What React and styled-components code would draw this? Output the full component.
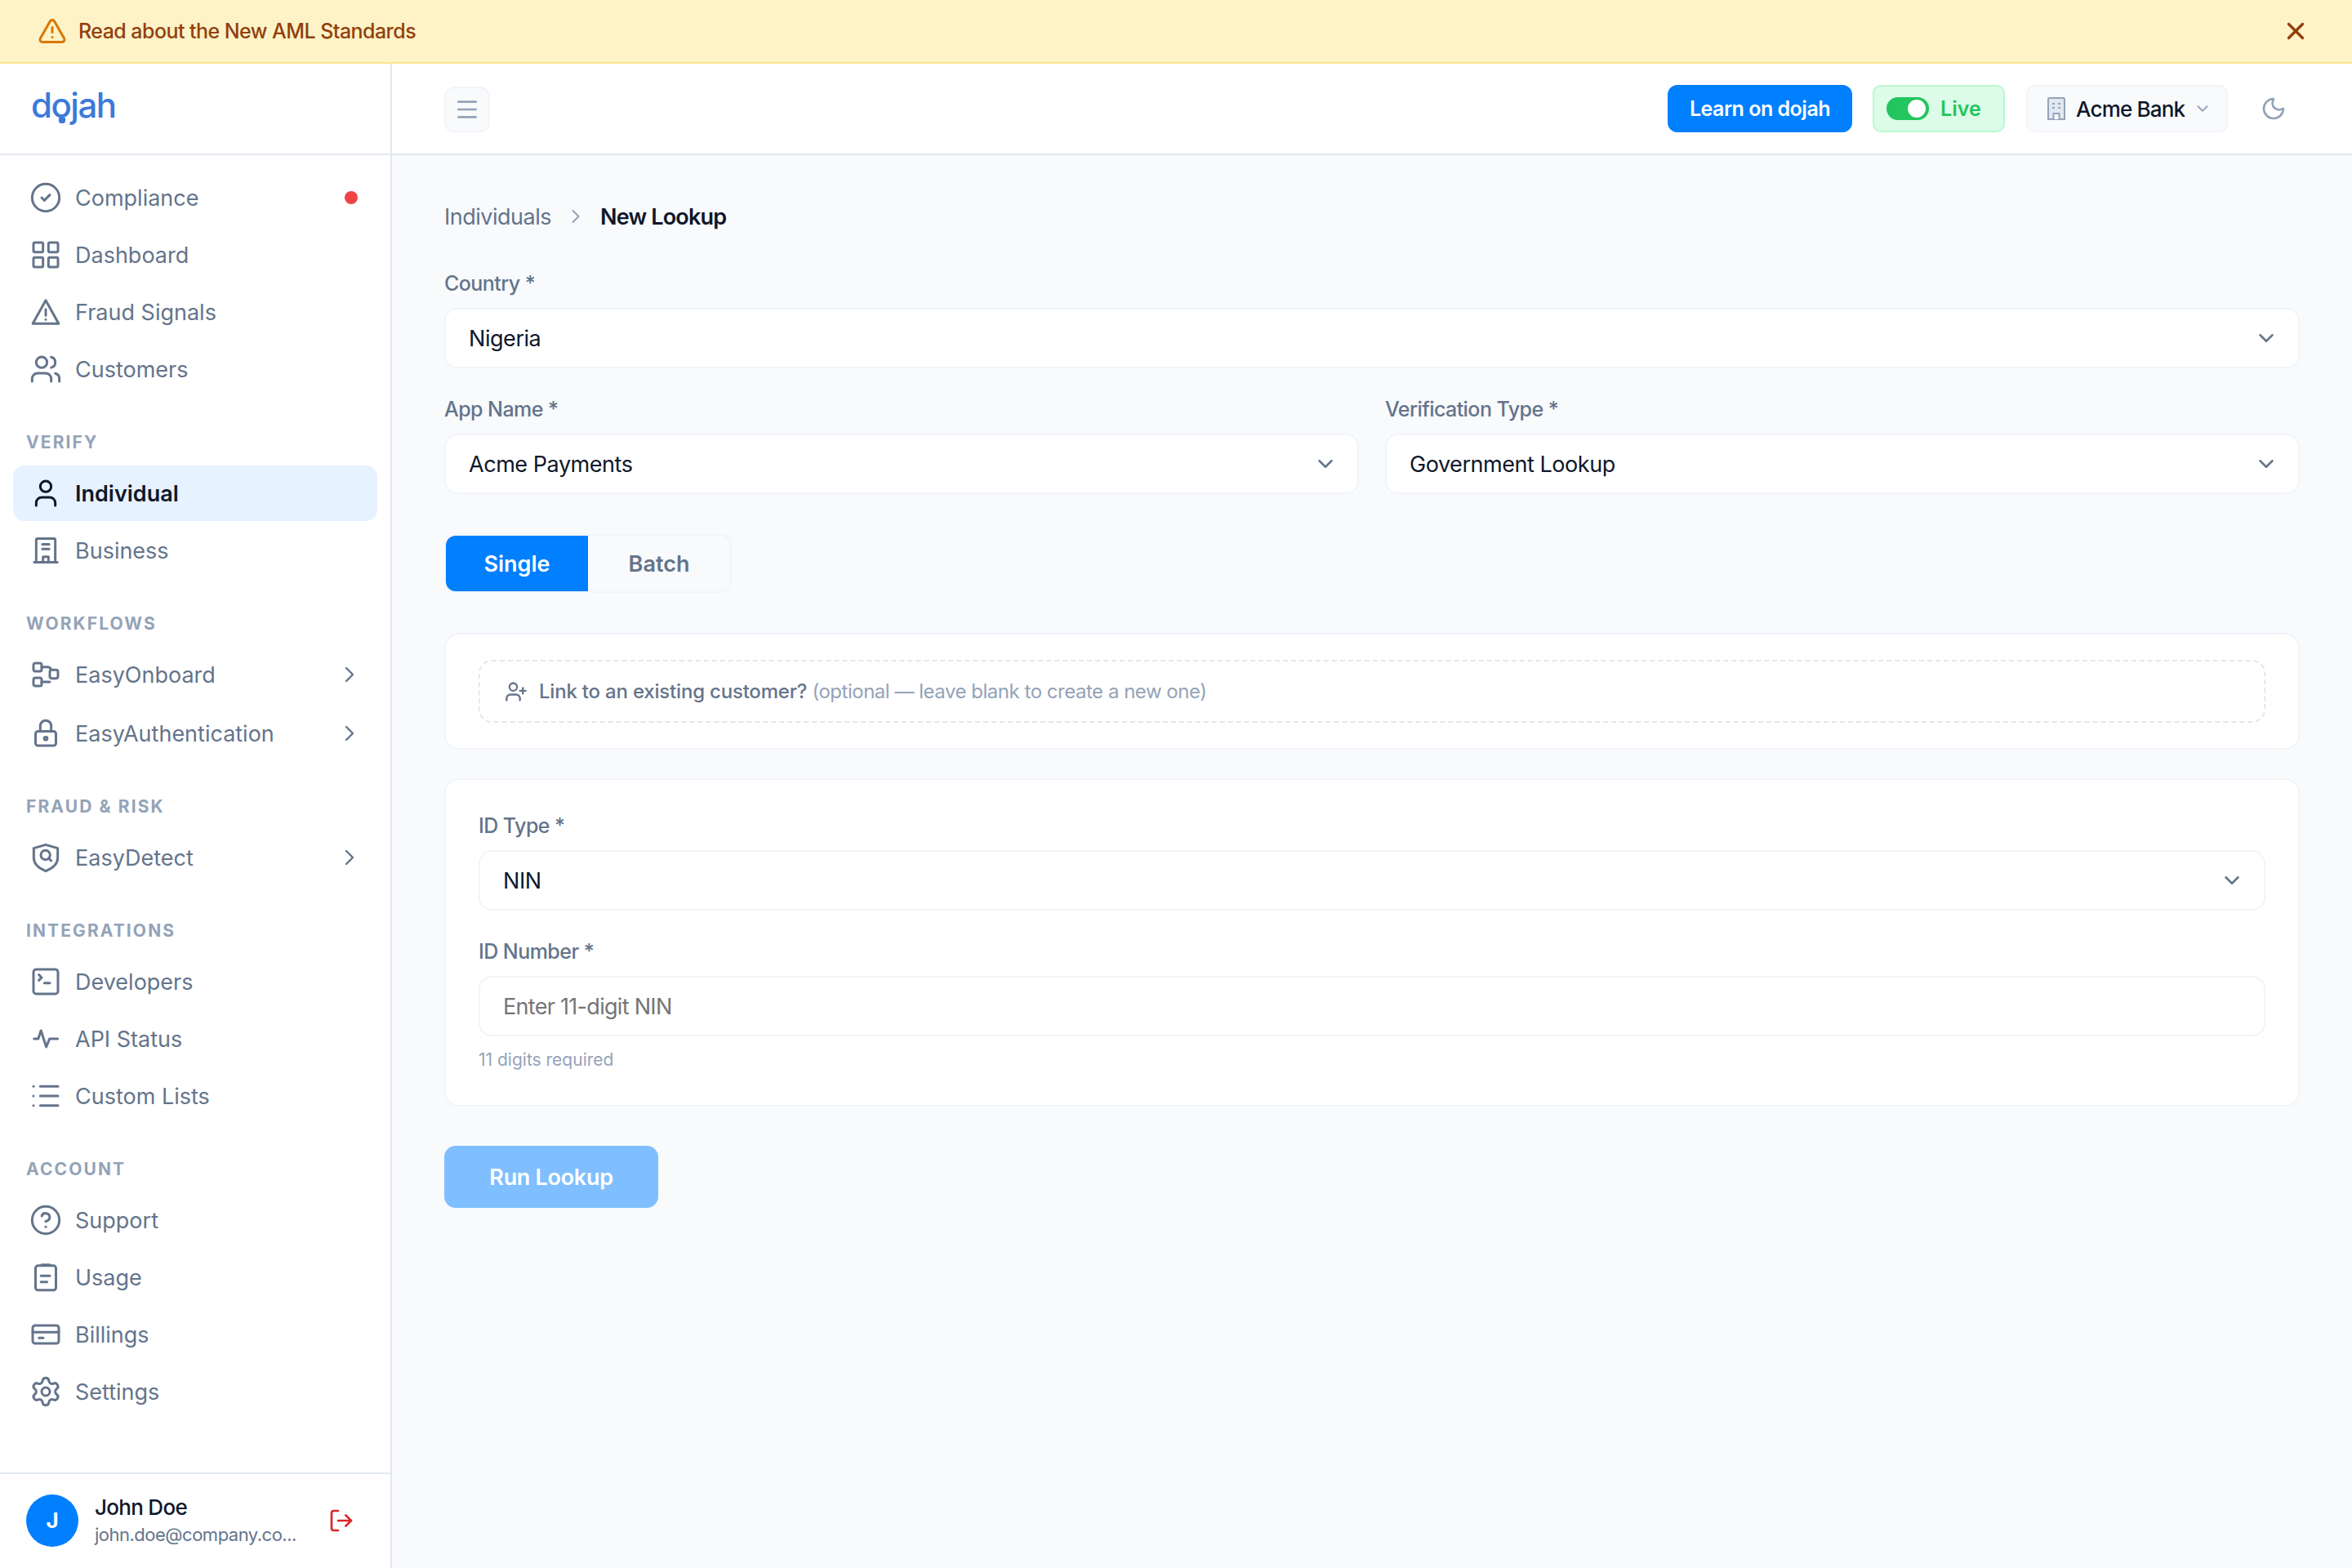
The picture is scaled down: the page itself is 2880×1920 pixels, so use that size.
import React from "react";
import styled, { createGlobalStyle } from "styled-components";
import {
  ChevronDown, ChevronRight, CircleCheck, CircleHelp, LayoutGrid, List, LogOut, Menu, Moon,
  Settings, SquareTerminal, TriangleAlert, User, UserPlus, Users, X,
} from "lucide-react";

const Global = createGlobalStyle`
  html, body { margin: 0; padding: 0; height: 100%; }
  body { font-family: Inter, "Liberation Sans", sans-serif; background: #f8fafc; }
  * { box-sizing: border-box; }
`;

const Glyph = ({ size = 24, children, ...rest }) => (
  <svg width={size} height={size} viewBox="0 0 24 24" fill="none" stroke="currentColor" strokeWidth="2" strokeLinecap="round" strokeLinejoin="round" {...rest}>
    {children}
  </svg>
);

const FlowIcon = (props) => (
  <Glyph {...props}>
    <rect x="3" y="3.6" width="6" height="6" rx="1.4" />
    <rect x="3" y="14.4" width="6" height="6" rx="1.4" />
    <rect x="15" y="8.6" width="6" height="6.2" rx="1.4" />
    <path d="M9 6.5h4a3 3 0 0 1 3 2M9 17.4h6" />
  </Glyph>
);

const LockIcon = (props) => (
  <Glyph {...props}>
    <rect x="4.5" y="10.5" width="15" height="10.5" rx="1.8" />
    <path d="M8 10.5V6.5a4 4 0 0 1 8 0v4" />
    <circle cx="12" cy="15.8" r="1.1" />
  </Glyph>
);

const ShieldFindIcon = (props) => (
  <Glyph {...props}>
    <path d="M12 2.6 20.8 5.2v7c0 4.8-3.8 7.8-8.8 9.8-5-2-8.8-5-8.8-9.8v-7z" />
    <circle cx="11.8" cy="10.2" r="3.4" />
    <path d="m14.3 12.7 1.7 1.7" />
  </Glyph>
);

const UsageIcon = (props) => (
  <Glyph {...props}>
    <rect x="4.5" y="3.5" width="15" height="18" rx="1.8" />
    <path d="M9 2.8h6M8.5 11H15M8.5 15.5H13" />
  </Glyph>
);

const BuildingIcon = (props) => (
  <Glyph {...props}>
    <path d="M5 20.7V4.300a1 1 0 0 1 1-1h12a1 1 0 0 1 1 1v16.4M3.500 20.7h17" />
    <path d="M9.500 7.500h5M9.500 11h5M10 20.7v-4h4v4" />
  </Glyph>
);

const WarnIcon = (props) => (
  <Glyph {...props}>
    <path d="M12 3.5 21.500 20.500h-19z" />
    <path d="M12 10v4.500M12 17.500h.01" />
  </Glyph>
);

const PulseIcon = (props) => (
  <Glyph {...props}>
    <path d="M3.400 12h3.100l2-6 3.900 12 2.400-6h6" />
  </Glyph>
);

const CardIcon = (props) => (
  <Glyph {...props}>
    <rect x="2.400" y="5.400" width="19.200" height="13.200" rx="1.800" />
    <path d="M2.400 10.400h19.200M7 14.500h3.200" />
  </Glyph>
);

const OfficeIcon = (props) => (
  <svg width="26" height="30" viewBox="0 0 26 30" {...props}>
    <path d="M3 28V3.500A1.500 1.500 0 0 1 4.500 2h17A1.500 1.500 0 0 1 23 3.500V28z" fill="#e2e8f0" stroke="#94a3b8" strokeWidth="2" />
    <path d="M8 9h3M15 9h3M8 14h3M15 14h3" stroke="#94a3b8" strokeWidth="2" />
    <path d="M9.500 28v-7h7v7" fill="#fff" stroke="#94a3b8" strokeWidth="2" />
  </svg>
);

const Banner = styled.div`
  height: 78px;
  background: #fef3c7;
  border-bottom: 2px solid #fde68a;
  display: flex;
  align-items: center;
  padding: 0 52px 0 46px;
  color: #92400e;
  font-size: 25px;
  font-weight: 500;
  gap: 14px;
  svg.warn { color: #d97706; }
`;

const BannerText = styled.span`
  flex: 1;
  letter-spacing: -0.55px;
`;

const Shell = styled.div`
  display: flex;
  height: 1842px;
`;

const Sidebar = styled.aside`
  width: 480px;
  background: #fff;
  border-right: 2px solid #e2e8f0;
  display: flex;
  flex-direction: column;
`;

const LogoBar = styled.div`
  height: 112px;
  flex: none;
  border-bottom: 2px solid #e2e8f0;
  display: flex;
  align-items: center;
  padding-left: 38px;
`;

const Logo = styled.div`
  position: relative;
  color: #3b7ad9;
  font-size: 42px;
  font-weight: 500;
  letter-spacing: -1.5px;
  line-height: 1;
  margin-bottom: 8px;
  svg { position: absolute; left: 33px; top: 36px; }
`;

const Nav = styled.nav`
  flex: 1;
  padding: 18px 16px 0;
`;

const GroupTitle = styled.div`
  height: 32px;
  line-height: 32px;
  margin: 40px 0 12px;
  padding-left: 16px;
  color: #94a3b8;
  font-size: 21px;
  font-weight: 700;
  letter-spacing: 2.1px;
`;

const NavItem = styled.a`
  height: 68px;
  margin-bottom: ${(p) => (p.$wide ? "4px" : "2px")};
  padding: 0 18px 0 20px;
  border-radius: 14px;
  display: flex;
  align-items: center;
  gap: 16px;
  font-size: 27px;
  font-weight: ${(p) => (p.$active ? 600 : 400)};
  color: ${(p) => (p.$active ? "#0f172a" : "#64748b")};
  background: ${(p) => (p.$active ? "#e6f2ff" : "transparent")};
`;

const NavLabel = styled.span`
  flex: 1;
`;

const Dot = styled.span`
  width: 16px;
  height: 16px;
  margin-right: 6px;
  border-radius: 50%;
  background: #ef4444;
`;

const UserBar = styled.div`
  height: 117px;
  flex: none;
  border-top: 2px solid #e2e8f0;
  display: flex;
  align-items: center;
  padding: 0 44px 2px 32px;
  gap: 20px;
`;

const Avatar = styled.div`
  width: 64px;
  height: 64px;
  flex: none;
  border-radius: 50%;
  background: #007fff;
  color: #fff;
  font-size: 26px;
  font-weight: 700;
  display: flex;
  align-items: center;
  justify-content: center;
`;

const UserInfo = styled.div`
  flex: 1;
  min-width: 0;
`;

const UserName = styled.div`
  color: #0f172a;
  font-size: 26px;
  font-weight: 500;
  line-height: 34px;
  letter-spacing: -0.7px;
`;

const UserMail = styled.div`
  color: #64748b;
  font-size: 22px;
  line-height: 32px;
  letter-spacing: -0.5px;
  white-space: nowrap;
`;

const Column = styled.div`
  flex: 1;
  display: flex;
  flex-direction: column;
  min-width: 0;
`;

const TopBar = styled.header`
  height: 112px;
  flex: none;
  background: #fff;
  border-bottom: 2px solid #e2e8f0;
  display: flex;
  align-items: center;
  padding: 0 80px 0 64px;
`;

const MenuButton = styled.button`
  width: 56px;
  height: 56px;
  padding: 0;
  border-radius: 12px;
  border: 2px solid #f1f5f9;
  background: #f8fafc;
  color: #94a3b8;
  display: flex;
  align-items: center;
  justify-content: center;
  margin: 2px auto 0 0;
`;

const LearnButton = styled.button`
  width: 226px;
  height: 58px;
  border: 0;
  border-radius: 12px;
  background: #007fff;
  color: #fff;
  font: 600 25px Inter, sans-serif;
  letter-spacing: -0.5px;
  margin-right: 25px;
`;

const LivePill = styled.div`
  width: 162px;
  height: 58px;
  border-radius: 10px;
  border: 2px solid #bbf7d0;
  background: #dcfce7;
  color: #22c55e;
  font-size: 25px;
  font-weight: 600;
  display: flex;
  align-items: center;
  gap: 14px;
  padding-left: 15px;
  margin-right: 26px;
`;

const Toggle = styled.span`
  width: 52px;
  height: 28px;
  border-radius: 14px;
  background: #22c55e;
  display: flex;
  justify-content: flex-end;
  align-items: center;
  padding-right: 4px;
  &::after {
    content: "";
    width: 22px;
    height: 22px;
    border-radius: 50%;
    background: #fff;
  }
`;

const OrgButton = styled.div`
  width: 247px;
  height: 58px;
  border-radius: 10px;
  border: 2px solid #f1f5f9;
  background: #f8fafc;
  color: #0f172a;
  font-size: 26px;
  font-weight: 500;
  display: flex;
  align-items: center;
  gap: 11px;
  padding-left: 22px;
  margin-right: 40px;
  letter-spacing: -0.8px;
  svg { flex: none; }
`;

const ThemeIcon = styled.span`
  color: #94a3b8;
  display: flex;
`;

const Main = styled.main`
  flex: 1;
  background: #f8fafc;
  padding: 58px 64px 0;
`;

const Crumbs = styled.div`
  height: 34px;
  display: flex;
  align-items: center;
  font-size: 27px;
  letter-spacing: -0.5px;
  color: #64748b;
  gap: 16px;
  margin-bottom: 49px;
  svg { color: #94a3b8; }
  b { color: #0f172a; font-weight: 600; letter-spacing: -0.8px; }
`;

const Field = styled.div`
  margin-bottom: ${(p) => (p.$last ? "0" : "34px")};
`;

const Label = styled.label`
  display: block;
  height: 32px;
  line-height: 32px;
  margin-bottom: 14px;
  color: #64748b;
  font-size: 25px;
  font-weight: 500;
  letter-spacing: -0.55px;
`;

const Control = styled.div`
  height: 74px;
  border: 2px solid #f1f5f9;
  border-radius: 16px;
  background: #fff;
  display: flex;
  align-items: center;
  justify-content: space-between;
  padding: 0 24px 0 28px;
  color: ${(p) => (p.$placeholder ? "#757575" : "#0f172a")};
  font-size: 27px;
  letter-spacing: ${(p) => (p.$placeholder ? "-0.7px" : "-0.45px")};
  svg { color: #64748b; }
`;

const TwoCols = styled.div`
  display: grid;
  grid-template-columns: 1fr 1fr;
  gap: 32px;
`;

const Tabs = styled.div`
  width: 352px;
  height: 72px;
  margin: 49px 0;
  border: 2px solid #f1f5f9;
  border-radius: 14px;
  display: flex;
  overflow: hidden;
`;

const Tab = styled.div`
  flex: 1;
  display: flex;
  align-items: center;
  justify-content: center;
  font-size: 27px;
  font-weight: 600;
  color: ${(p) => (p.$on ? "#fff" : "#64748b")};
  background: ${(p) => (p.$on ? "#007fff" : "transparent")};
`;

const Card = styled.section`
  background: #fff;
  border: 2px solid #f1f5f9;
  border-radius: 18px;
  padding: ${(p) => p.$pad};
  margin-bottom: 35px;
`;

const LinkRow = styled.div`
  height: 77px;
  border: 2px dashed #e2e8f0;
  border-radius: 16px;
  display: flex;
  align-items: center;
  gap: 14px;
  padding-left: 30px;
  font-size: 24px;
  color: #64748b;
  font-weight: 500;
  letter-spacing: -0.2px;
  span { color: #94a3b8; font-weight: 400; letter-spacing: -0.48px; }
`;

const Help = styled.div`
  margin-top: 13px;
  color: #94a3b8;
  font-size: 21px;
  line-height: 32px;
`;

const RunButton = styled.button`
  width: 262px;
  height: 76px;
  margin-top: 13px;
  border: 0;
  border-radius: 14px;
  background: #7fbfff;
  color: #fff;
  font: 600 27px Inter, sans-serif;
  letter-spacing: -0.3px;
`;

const groups = [
  { items: [["Compliance", CircleCheck, "dot"], ["Dashboard", LayoutGrid], ["Fraud Signals", WarnIcon], ["Customers", Users]] },
  { title: "VERIFY", items: [["Individual", User, "active"], ["Business", BuildingIcon]] },
  { title: "WORKFLOWS", items: [["EasyOnboard", FlowIcon, "more"], ["EasyAuthentication", LockIcon, "more"]] },
  { title: "FRAUD & RISK", items: [["EasyDetect", ShieldFindIcon, "more"]] },
  { title: "INTEGRATIONS", items: [["Developers", SquareTerminal], ["API Status", PulseIcon], ["Custom Lists", List]] },
  { title: "ACCOUNT", items: [["Support", CircleHelp], ["Usage", UsageIcon], ["Billings", CardIcon], ["Settings", Settings]] },
];

function Select({ value }) {
  return (
    <Control>
      {value}
      <ChevronDown size={30} strokeWidth={2} />
    </Control>
  );
}

export default function App() {
  return (
    <>
      <Global />
      <Banner>
        <TriangleAlert className="warn" size={36} strokeWidth={2} />
        <BannerText>Read about the New AML Standards</BannerText>
        <X size={34} strokeWidth={2.4} />
      </Banner>
      <Shell>
        <Sidebar>
          <LogoBar>
            <Logo>
              dojah
              <svg width="10" height="7" viewBox="0 0 10 7"><path d="M1 0h8v4a3 3 0 0 1-3 3H4a3 3 0 0 1-3-3z" fill="#3b7ad9" /></svg>
            </Logo>
          </LogoBar>
          <Nav>
            {groups.map((g, i) => (
              <div key={i}>
                {g.title && <GroupTitle>{g.title}</GroupTitle>}
                {g.items.map(([label, Icon, flag]) => (
                  <NavItem key={label} $active={flag === "active"} $wide={flag === "more"}>
                    <Icon size={40} strokeWidth={1.8} />
                    <NavLabel>{label}</NavLabel>
                    {flag === "dot" && <Dot />}
                    {flag === "more" && <ChevronRight size={32} strokeWidth={1.8} />}
                  </NavItem>
                ))}
              </div>
            ))}
          </Nav>
          <UserBar>
            <Avatar>J</Avatar>
            <UserInfo>
              <UserName>John Doe</UserName>
              <UserMail>john.doe@company.co...</UserMail>
            </UserInfo>
            <LogOut size={32} color="#dc2626" strokeWidth={2} />
          </UserBar>
        </Sidebar>
        <Column>
          <TopBar>
            <MenuButton><Menu size={32} strokeWidth={2} /></MenuButton>
            <LearnButton>Learn on dojah</LearnButton>
            <LivePill><Toggle />Live</LivePill>
            <OrgButton>
              <OfficeIcon />
              Acme Bank
              <ChevronDown size={22} strokeWidth={2} color="#94a3b8" />
            </OrgButton>
            <ThemeIcon><Moon size={32} strokeWidth={2} /></ThemeIcon>
          </TopBar>
          <Main>
            <Crumbs>
              Individuals
              <ChevronRight size={28} strokeWidth={1.8} />
              <b>New Lookup</b>
            </Crumbs>
            <Field>
              <Label>Country *</Label>
              <Select value="Nigeria" />
            </Field>
            <TwoCols>
              <Field $last>
                <Label>App Name *</Label>
                <Select value="Acme Payments" />
              </Field>
              <Field $last>
                <Label>Verification Type *</Label>
                <Select value="Government Lookup" />
              </Field>
            </TwoCols>
            <Tabs>
              <Tab $on>Single</Tab>
              <Tab>Batch</Tab>
            </Tabs>
            <Card $pad="31px 40px">
              <LinkRow>
                <UserPlus size={28} strokeWidth={2} />
                <div>Link to an existing customer? <span>(optional — leave blank to create a new one)</span></div>
              </LinkRow>
            </Card>
            <Card $pad="40px 40px 39px">
              <Field>
                <Label>ID Type *</Label>
                <Select value="NIN" />
              </Field>
              <Field $last>
                <Label>ID Number *</Label>
                <Control $placeholder>Enter 11-digit NIN</Control>
                <Help>11 digits required</Help>
              </Field>
            </Card>
            <RunButton>Run Lookup</RunButton>
          </Main>
        </Column>
      </Shell>
    </>
  );
}
